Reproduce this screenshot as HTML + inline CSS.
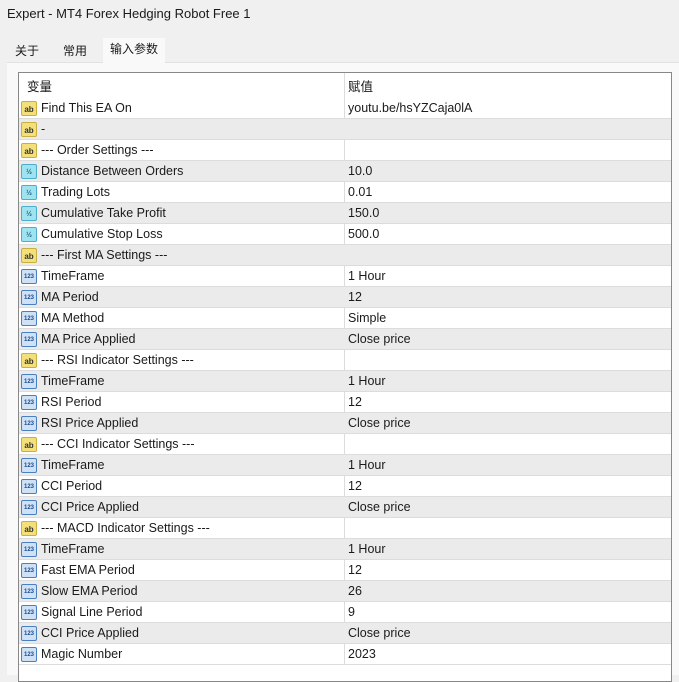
<!DOCTYPE html>
<html><head><meta charset="utf-8"><style>
*{margin:0;padding:0;box-sizing:border-box}
body{width:679px;height:675px;overflow:hidden;background:#f0f0f0;font-family:"Liberation Sans","Noto Sans CJK SC",sans-serif;font-size:12.5px;color:#1a1a1a;position:relative}
.title{position:absolute;left:7px;top:6px;font-size:13px}
.tab{position:absolute;top:40px;height:22px;line-height:22px;font-size:12px;text-align:center}
.panel{position:absolute;left:7px;top:62px;width:672px;height:613px;background:#f9f9f9;border-top:1px solid #e2e2e2}
.box{position:absolute;left:18px;top:72px;width:654px;height:610px;border:1px solid #888;background:#fff}
.row{position:absolute;left:0;width:652px;height:21px;border-bottom:1px solid #dcdcdc}
.row.g{background:#ebebeb}
.row span{position:absolute;top:3px;white-space:nowrap}
.c1{left:22px}.c2{left:329px}
.div{position:absolute;left:325px;top:0;width:1px;height:592px;background:#dcdcdc}
.ic{position:absolute;left:2px;top:3px;width:16px;height:15px;border-radius:2px;font-size:8px;line-height:15px;text-align:center;font-weight:bold}
.ab{background:#f3e07a;border:1px solid #c8b040;color:#333}
.v2{background:#9fe3f0;border:1px solid #4aaecc;color:#1a6080;font-size:7px}
.n{background:#cfe1f5;border:1px solid #4a7fc0;color:#1a4a90;font-size:6px}
</style></head><body>
<div class="title">Expert - MT4 Forex Hedging Robot Free 1</div>
<div class="panel"></div>
<div class="tab" style="left:7px;width:40px">关于</div>
<div class="tab" style="left:53px;width:44px">常用</div>
<div class="tab" style="left:103px;width:62px;background:#f9f9f9;top:38px;height:25px">输入参数</div>
<div class="box">
<div class="div"></div>
<div class="row" style="top:0;height:25px;border:none"><span style="left:8px;top:3px">变量</span><span style="left:329px;top:3px">赋值</span></div>
<div id="rows"></div>
</div>
<script>
var d=[["ab","Find This EA On","youtu.be/hsYZCaja0lA"],["ab","-",""],["ab","--- Order Settings ---",""],["v2","Distance Between Orders","10.0"],["v2","Trading Lots","0.01"],["v2","Cumulative Take Profit","150.0"],["v2","Cumulative Stop Loss","500.0"],["ab","--- First MA Settings ---",""],["n","TimeFrame","1 Hour"],["n","MA Period","12"],["n","MA Method","Simple"],["n","MA Price Applied","Close price"],["ab","--- RSI Indicator Settings ---",""],["n","TimeFrame","1 Hour"],["n","RSI Period","12"],["n","RSI Price Applied","Close price"],["ab","--- CCI Indicator Settings ---",""],["n","TimeFrame","1 Hour"],["n","CCI Period","12"],["n","CCI Price Applied","Close price"],["ab","--- MACD Indicator Settings ---",""],["n","TimeFrame","1 Hour"],["n","Fast EMA Period","12"],["n","Slow EMA Period","26"],["n","Signal Line Period","9"],["n","CCI Price Applied","Close price"],["n","Magic Number","2023"]];
var t={ab:"ab",v2:"½",n:"123"},h="";
d.forEach(function(r,i){h+='<div class="row'+(i%2?' g':'')+'" style="top:'+(25+i*21)+'px"><div class="ic '+r[0]+'">'+t[r[0]]+'</div><span class="c1">'+r[1]+'</span><span class="c2">'+r[2]+'</span></div>';});
document.getElementById("rows").outerHTML=h;
</script>
</body></html>
